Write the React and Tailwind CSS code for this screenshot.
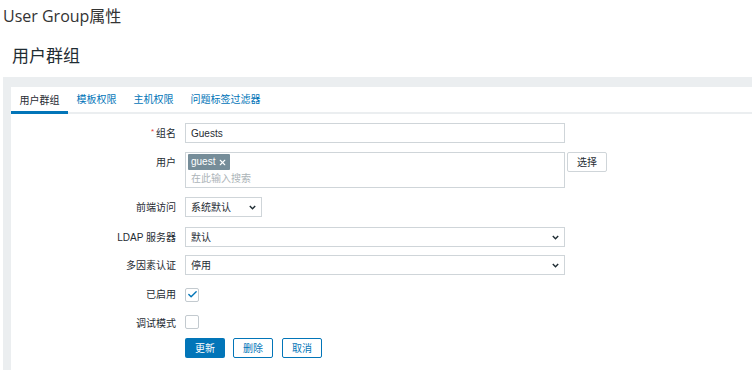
import { Check, X } from "lucide-react";

const cjk = { fontFamily: '"Liberation Sans", "Noto Sans CJK SC", sans-serif' };

function Chevron() {
  return (
    <svg width="7" height="5" viewBox="0 0 7 5" className="shrink-0">
      <path d="M0.8 0.9 L3.5 3.7 L6.2 0.9" fill="none" stroke="#1f2c33" strokeWidth="1.4" />
    </svg>
  );
}

function Select({ value, width }) {
  return (
    <div
      className={`h-[20px] ${width} border border-[#cfd5d9] bg-white flex items-center justify-between pl-[5px] pr-[5px] text-[10px] text-[#1f2c33]`}
    >
      <span>{value}</span>
      <Chevron />
    </div>
  );
}

function Row({ label, required, children, className = "", labelClass = "items-center" }) {
  return (
    <div className={`flex gap-[9px] ${className}`}>
      <div className={`w-[165px] shrink-0 flex justify-end text-[10px] text-[#1f2c33] ${labelClass}`}>
        {required && <span className="text-[#e33734] text-[8px] mr-[2px] -mt-[3px]">*</span>}
        {label}
      </div>
      {children}
    </div>
  );
}

function Checkbox({ checked }) {
  return (
    <div className="w-[14px] h-[14px] border border-[#c3cacf] rounded-[2px] bg-white flex items-center justify-center">
      {checked && <Check size={11} strokeWidth={3} color="#0275b8" />}
    </div>
  );
}

export default function App() {
  const tabs = ["用户群组", "模板权限", "主机权限", "问题标签过滤器"];

  return (
    <div className="w-[752px] h-[370px] overflow-hidden bg-white" style={cjk}>
      <div
        className="pl-[3px] pt-[5px] h-[32px] text-[16px] text-[#333] leading-[22px]"
        style={{ fontFamily: '"Open Sans", "Noto Sans CJK SC", sans-serif' }}
      >
        User Group属性
      </div>
      <div
        className="pl-[12px] pt-[12px] h-[45px] text-[17px] text-[#1f2c33] leading-[24px]"
        style={{ fontFamily: '"Open Sans", "Noto Sans CJK SC", sans-serif' }}
      >
        用户群组
      </div>

      <div className="ml-[3px] bg-[#ebeef0] pl-[8px] pt-[10px] h-[300px]">
        <div className="bg-white h-full">
          <div className="flex h-[27px] border-b-2 border-[#ebeef0]">
            {tabs.map((t, i) => (
              <div
                key={t}
                className={`px-[8.5px] flex items-center text-[10px] ${
                  i === 0 ? "text-[#1f2c33] border-b-[3px] border-[#0275b8] -mb-[2px] pt-[3px]" : "text-[#0275b8]"
                }`}
              >
                {t}
              </div>
            ))}
          </div>

          <div className="pt-[9px] flex flex-col">
            <Row label="组名" required>
              <div className="h-[20px] w-[380px] border border-[#cfd5d9] flex items-center pl-[5px] text-[10px] text-[#1f2c33]">
                Guests
              </div>
            </Row>

            <Row label="用户" labelClass="items-start pt-[3px]" className="mt-[9px]">
              <div className="h-[36px] w-[380px] border border-[#cfd5d9] px-[2px] pt-[1px] flex flex-col items-start">
                <div className="flex items-center h-[16px] bg-[#768d99] text-white text-[10px] leading-none pl-[3px] pr-[3px] gap-[3px] rounded-[1px]">
                  guest
                  <X size={9} strokeWidth={3} />
                </div>
                <div className="pl-[3px] text-[10px] text-[#acb4b8] leading-[16px] mt-[1px]">在此输入搜索</div>
              </div>
              <button className="-ml-[7px] h-[20px] w-[40px] border border-[#cfd5d9] bg-white text-[10px] text-[#1f2c33] rounded-[2px]">
                选择
              </button>
            </Row>

            <Row label="前端访问" className="mt-[9px]">
              <Select value="系统默认" width="w-[77px]" />
            </Row>

            <Row label="LDAP 服务器" className="mt-[10px]">
              <Select value="默认" width="w-[380px]" />
            </Row>

            <Row label="多因素认证" className="mt-[8px]">
              <Select value="停用" width="w-[380px]" />
            </Row>

            <Row label="已启用" className="mt-[9px] h-[20px]">
              <div className="flex items-center pt-[1px]">
                <Checkbox checked />
              </div>
            </Row>

            <Row label="调试模式" className="mt-[9px] h-[20px]">
              <div className="flex items-center -mt-[2px]">
                <Checkbox />
              </div>
            </Row>

            <Row label="" className="mt-[5px]">
              <div className="flex gap-[8px]">
                <button className="h-[20px] w-[40px] bg-[#0275b8] text-white text-[10px] rounded-[2px]">更新</button>
                <button className="h-[20px] w-[40px] border border-[#0275b8] text-[#0275b8] bg-white text-[10px] rounded-[2px]">
                  删除
                </button>
                <button className="ml-[1px] h-[20px] w-[40px] border border-[#0275b8] text-[#0275b8] bg-white text-[10px] rounded-[2px]">
                  取消
                </button>
              </div>
            </Row>
          </div>
        </div>
      </div>
    </div>
  );
}
